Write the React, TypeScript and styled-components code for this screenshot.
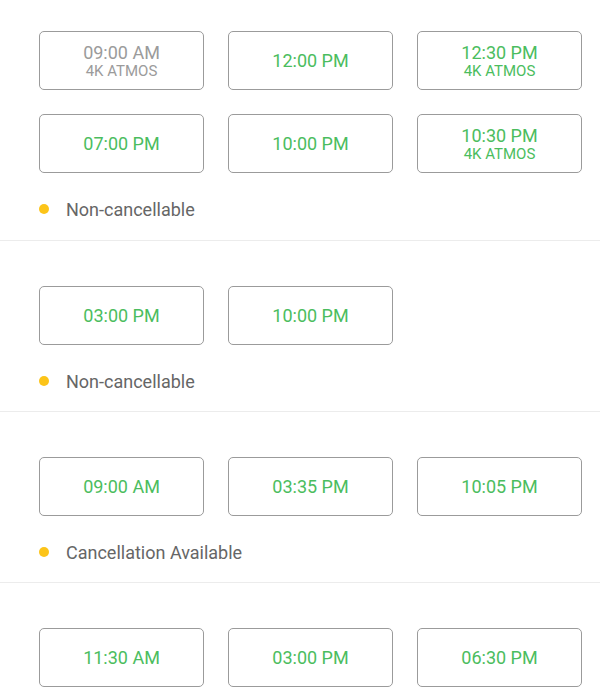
import React from 'react'
import styled, { createGlobalStyle } from 'styled-components'

const GlobalStyle = createGlobalStyle`
  html, body {
    margin: 0;
    padding: 0;
    background: #fff;
    font-family: Roboto, "Liberation Sans", Arial, sans-serif;
  }
`

const Page = styled.div`
  width: 600px;
  height: 700px;
  overflow: hidden;
`

const Section = styled.section<{ $first?: boolean }>`
  padding: ${(p) => (p.$first ? '31px 0 21px' : '45px 0 20px')} 39px;
  border-bottom: 1px solid #ececec;
`

const Grid = styled.div`
  display: grid;
  grid-template-columns: repeat(3, 165px);
  gap: 24px;
`

const Slot = styled.button<{ $muted?: boolean }>`
  box-sizing: border-box;
  height: 59px;
  border: 1px solid #9b9b9b;
  border-radius: 5px;
  background: #fff;
  display: flex;
  flex-direction: column;
  align-items: center;
  justify-content: center;
  font-family: inherit;
  color: ${(p) => (p.$muted ? '#9b9b9b' : '#4bbd5e')};
  padding: 0;
  cursor: pointer;
`

const Time = styled.span`
  font-size: 18px;
  line-height: 21px;
`

const Format = styled.span`
  font-size: 15px;
  line-height: 16px;
  text-transform: uppercase;
`

const Note = styled.div`
  display: flex;
  align-items: center;
  gap: 17px;
  margin-top: 26px;
  height: 20px;
  font-size: 18px;
  color: #666;
`

const Dot = styled.span`
  width: 10px;
  height: 10px;
  border-radius: 50%;
  background: #fcc419;
`

type Show = { time: string; format?: string; muted?: boolean }

const venues: { shows: Show[]; note?: string }[] = [
  {
    shows: [
      { time: '09:00 AM', format: '4K ATMOS', muted: true },
      { time: '12:00 PM' },
      { time: '12:30 PM', format: '4K ATMOS' },
      { time: '07:00 PM' },
      { time: '10:00 PM' },
      { time: '10:30 PM', format: '4K ATMOS' },
    ],
    note: 'Non-cancellable',
  },
  {
    shows: [{ time: '03:00 PM' }, { time: '10:00 PM' }],
    note: 'Non-cancellable',
  },
  {
    shows: [{ time: '09:00 AM' }, { time: '03:35 PM' }, { time: '10:05 PM' }],
    note: 'Cancellation Available',
  },
  {
    shows: [{ time: '11:30 AM' }, { time: '03:00 PM' }, { time: '06:30 PM' }],
  },
]

export default function App() {
  return (
    <Page>
      <GlobalStyle />
      {venues.map((v, i) => (
        <Section key={i} $first={i === 0}>
          <Grid>
            {v.shows.map((s) => (
              <Slot key={s.time} $muted={s.muted}>
                <Time>{s.time}</Time>
                {s.format && <Format>{s.format}</Format>}
              </Slot>
            ))}
          </Grid>
          {v.note && (
            <Note>
              <Dot />
              {v.note}
            </Note>
          )}
        </Section>
      ))}
    </Page>
  )
}
